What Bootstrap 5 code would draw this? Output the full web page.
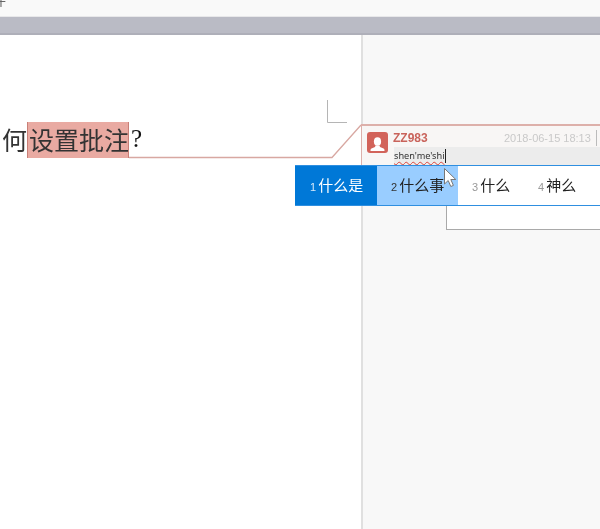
<!DOCTYPE html>
<html lang="zh-CN">
<head>
<meta charset="utf-8">
<title>批注</title>
<link href="https://cdn.jsdelivr.net/npm/bootstrap@5.3.0/dist/css/bootstrap.min.css" rel="stylesheet">
<style>
html,body{height:100%;overflow:hidden;background:#fff;font-family:"Liberation Sans","Noto Sans CJK SC",sans-serif}
.app-root{position:relative;width:600px;height:529px;overflow:hidden;filter:blur(.35px)}
.ribbon-strip{height:17px;background:#f9f9f9;overflow:hidden;border-bottom:1px solid #e8e8ea}
.ribbon-glyph{font:14px/1 "Noto Sans CJK SC",sans-serif;color:#666;margin:-8px 0 0 -8px;display:block}
.gray-band{height:18px;background:#babbc5;border-bottom:2px solid #aeafb9}
.doc-body{height:494px}
.page-sheet{width:361px;background:#fff;flex:none}
.margin-pane{background:#f8f8f8;border-left:2px solid #e0e0e0}
.doc-line{position:absolute;left:2px;top:122px;height:36px;font:25px/36px "Noto Sans CJK SC",serif;color:#333;white-space:nowrap}
.doc-text{display:block;margin-top:-1px}
.doc-mark{background:#e9aaa2;border-left:1px solid #c97f77;border-right:1px solid #c97f77;width:102px;height:36px;padding-left:1px}
.doc-end{font:25px/36px "Liberation Serif",serif;color:#111;margin-left:2px}
.over-svg{position:absolute;left:0;top:0;pointer-events:none}
.note-card{position:absolute;left:361px;top:124px;width:239px;height:42px;background:#f8f6f5;border-top:2px solid #ddb0aa;border-left:1px solid #ddb0aa}
.avatar-tile{position:absolute;left:5px;top:6px;width:21px;height:21px;background:#d2635a;border-radius:3px}
.note-name{position:absolute;left:31px;top:5px;font:700 12px/14px "Liberation Sans",sans-serif;color:#c9635b}
.note-date{position:absolute;left:142px;top:5px;font:11px/14px "Liberation Sans",sans-serif;color:#c9c9c9;white-space:nowrap}
.note-sep{position:absolute;left:234px;top:4px;width:1px;height:16px;background:#bbb}
.note-input{position:absolute;left:32px;top:21px;right:0;height:18px;background:#ececec;font:9.200px/17px "Noto Sans","Liberation Sans",sans-serif;color:#333}
.typed-text{text-decoration:underline wavy #d9443c 1px;text-underline-offset:2px;border-right:1px solid #222;display:inline-block;line-height:14px;margin-top:1px}
.ime-box{position:absolute;left:446px;top:205px;width:154px;height:25px;border-left:1px solid #a9a9a9;border-bottom:1px solid #a9a9a9;background:#fff}
.ime-bar{position:absolute;left:295px;top:165px;width:305px;height:41px;background:#fff;border-top:1px solid #2f8fe0;border-bottom:1px solid #2f8fe0}
.ime-item{height:39px;font:15px/37px "Noto Sans CJK SC",sans-serif;color:#222;white-space:nowrap;flex:none}
.ime-num{font:11px "Liberation Sans",sans-serif;color:#999;margin-right:2px}
.ime-on{width:82px;background:#0078d7;color:#fff;padding-left:15px}
.ime-on .ime-num{color:#d5e9fa}
.ime-hover{width:81px;background:#99cdff;padding-left:14px}
.ime-hover .ime-num{color:#333}
.ime-plain-a{width:66px;padding-left:14px}
.ime-plain-b{width:70px;padding-left:14px}
</style>
</head>
<body>
<div class="app-root">
  <div class="ribbon-strip"><span class="ribbon-glyph">件</span></div>
  <div class="gray-band"></div>
  <div class="doc-body d-flex">
    <div class="page-sheet"></div>
    <div class="margin-pane flex-grow-1"></div>
  </div>

  <div class="doc-line d-flex">
    <span class="doc-text">何</span>
    <span class="doc-mark"><span class="doc-text">设置批注</span></span>
    <span class="doc-end doc-text">?</span>
  </div>

  <svg class="over-svg" width="600" height="529" viewBox="0 0 600 529" fill="none">
    <path d="M129 157.500H332L361 125" stroke="#d8a8a2" stroke-width="1.300"/>
    <path d="M327.500 100V122.500H347" stroke="#b5b5b5" stroke-width="1"/>
  </svg>

  <div class="note-card">
    <div class="avatar-tile">
      <svg width="21" height="21" viewBox="0 0 21 21" fill="#fff"><ellipse cx="10.500" cy="7.500" rx="3.600" ry="4.300"/><path d="M8.500 11.500h4l.5 1.500 3.500 1.500c.8.400 1 1 1 2.500H3.500c0-1.500.2-2.100 1-2.500L8 13z"/></svg>
    </div>
    <div class="note-name">ZZ983</div>
    <div class="note-date">2018-06-15 18:13</div>
    <div class="note-sep"></div>
    <div class="note-input"><span class="typed-text">shen'me'shi</span></div>
  </div>

  <div class="ime-box"></div>
  <div class="ime-bar d-flex">
    <div class="ime-item ime-on"><span class="ime-num">1</span>什么是</div>
    <div class="ime-item ime-hover"><span class="ime-num">2</span>什么事</div>
    <div class="ime-item ime-plain-a"><span class="ime-num">3</span>什么</div>
    <div class="ime-item ime-plain-b"><span class="ime-num">4</span>神么</div>
  </div>

  <svg class="over-svg" width="600" height="529" viewBox="0 0 600 529">
    <path d="M444.500 168.500V184l3.700-3.500 2.600 6 2.600-1.100-2.600-5.900h5z" fill="#fff" stroke="#777" stroke-width="1"/>
  </svg>
</div>
<script src="https://cdn.jsdelivr.net/npm/bootstrap@5.3.0/dist/js/bootstrap.bundle.min.js"></script>
</body>
</html>
